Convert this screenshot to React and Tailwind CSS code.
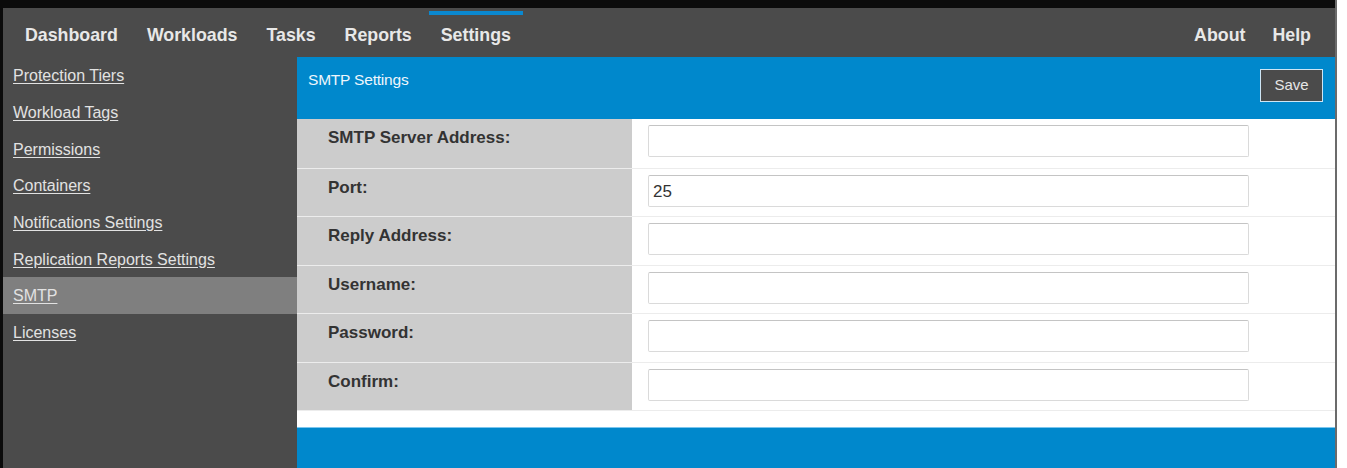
// SMTP settings page: top nav, settings sidebar, form panel
const NAV_LEFT = ["Dashboard", "Workloads", "Tasks", "Reports", "Settings"];
const NAV_RIGHT = ["About", "Help"];

const SIDE_ITEMS = [
  "Protection Tiers",
  "Workload Tags",
  "Permissions",
  "Containers",
  "Notifications Settings",
  "Replication Reports Settings",
  "SMTP",
  "Licenses",
];

const FIELDS = [
  { label: "SMTP Server Address:", value: "" },
  { label: "Port:", value: "25" },
  { label: "Reply Address:", value: "" },
  { label: "Username:", value: "" },
  { label: "Password:", value: "", type: "password" },
  { label: "Confirm:", value: "", type: "password" },
];

function NavItem({ label, active }) {
  return (
    <div className="flex h-full flex-col">
      <div className={`mt-[3px] h-[4px] w-full ${active ? "bg-[#0a88d0]" : "bg-transparent"}`} />
      <div className="flex flex-1 items-center px-3 pb-[1px] text-[17.8px] font-bold text-[#e8e8e8]">{label}</div>
    </div>
  );
}

function Sidebar() {
  return (
    <div className="flex w-[294px] flex-col bg-[#4b4b4b]">
      {SIDE_ITEMS.map((item) => (
        <div
          key={item}
          className={`flex h-[36.7px] items-center pl-[10px] pt-[2px] ${item === "SMTP" ? "bg-[#7f7f7f]" : ""}`}
        >
          <a className="cursor-pointer text-[16px] text-[#e2e2e2] underline underline-offset-2">{item}</a>
        </div>
      ))}
    </div>
  );
}

function FormRow({ field, first }) {
  return (
    <div className={`flex h-[48.5px] ${first ? "" : "border-t border-[#ececec]"}`}>
      <div className="w-[335px] bg-[#cccccc] pl-[31px] pt-[6px] text-[17px] font-bold text-[#333333]">
        {field.label}
      </div>
      <div className="flex-1 pl-[16px] pt-[6px]">
        <input
          type={field.type || "text"}
          defaultValue={field.value}
          className="h-[32px] w-[601px] rounded-[2px] border border-[#dadada] border-t-[#c4c4c4] bg-white px-[4px] pt-[3px] text-[17px] text-[#333333] outline-none"
        />
      </div>
    </div>
  );
}

export default function App() {
  return (
    <div className="flex h-[468px] w-full bg-white font-['Liberation_Sans',Arial,sans-serif]">
      <div className="flex w-[1337px] flex-col border-r-2 border-[#6b6b6b] bg-[#0b0b0b] pl-[3px] pt-[8px]">
        <div className="flex h-[49px] items-stretch justify-between bg-[#4b4b4b] pl-[10px] pr-[12px]">
          <div className="flex gap-[5px]">
            {NAV_LEFT.map((n) => (
              <NavItem key={n} label={n} active={n === "Settings"} />
            ))}
          </div>
          <div className="flex gap-[3px]">
            {NAV_RIGHT.map((n) => (
              <NavItem key={n} label={n} />
            ))}
          </div>
        </div>

        <div className="flex flex-1">
          <Sidebar />
          <div className="flex flex-1 flex-col bg-white">
            <div className="flex h-[62px] items-start justify-between bg-[#0088cc] pl-[11px] pr-[12px]">
              <div className="pt-[11px] text-[15.5px] tracking-[-0.2px] text-[#eef6fc]">SMTP Settings</div>
              <button className="mt-[12px] h-[33px] w-[63px] border border-[#cfe6f5] bg-[#4b4b4b] text-[15px] text-[#e6e6e6]">
                Save
              </button>
            </div>
            <div className="flex flex-col">
              {FIELDS.map((f, i) => (
                <FormRow key={f.label} field={f} first={i === 0} />
              ))}
            </div>
            <div className="h-[17px] border-t border-[#ececec] bg-white" />
            <div className="flex-1 border-t border-[#7cc6ee] bg-[#0088cc]" />
          </div>
        </div>
      </div>
    </div>
  );
}
